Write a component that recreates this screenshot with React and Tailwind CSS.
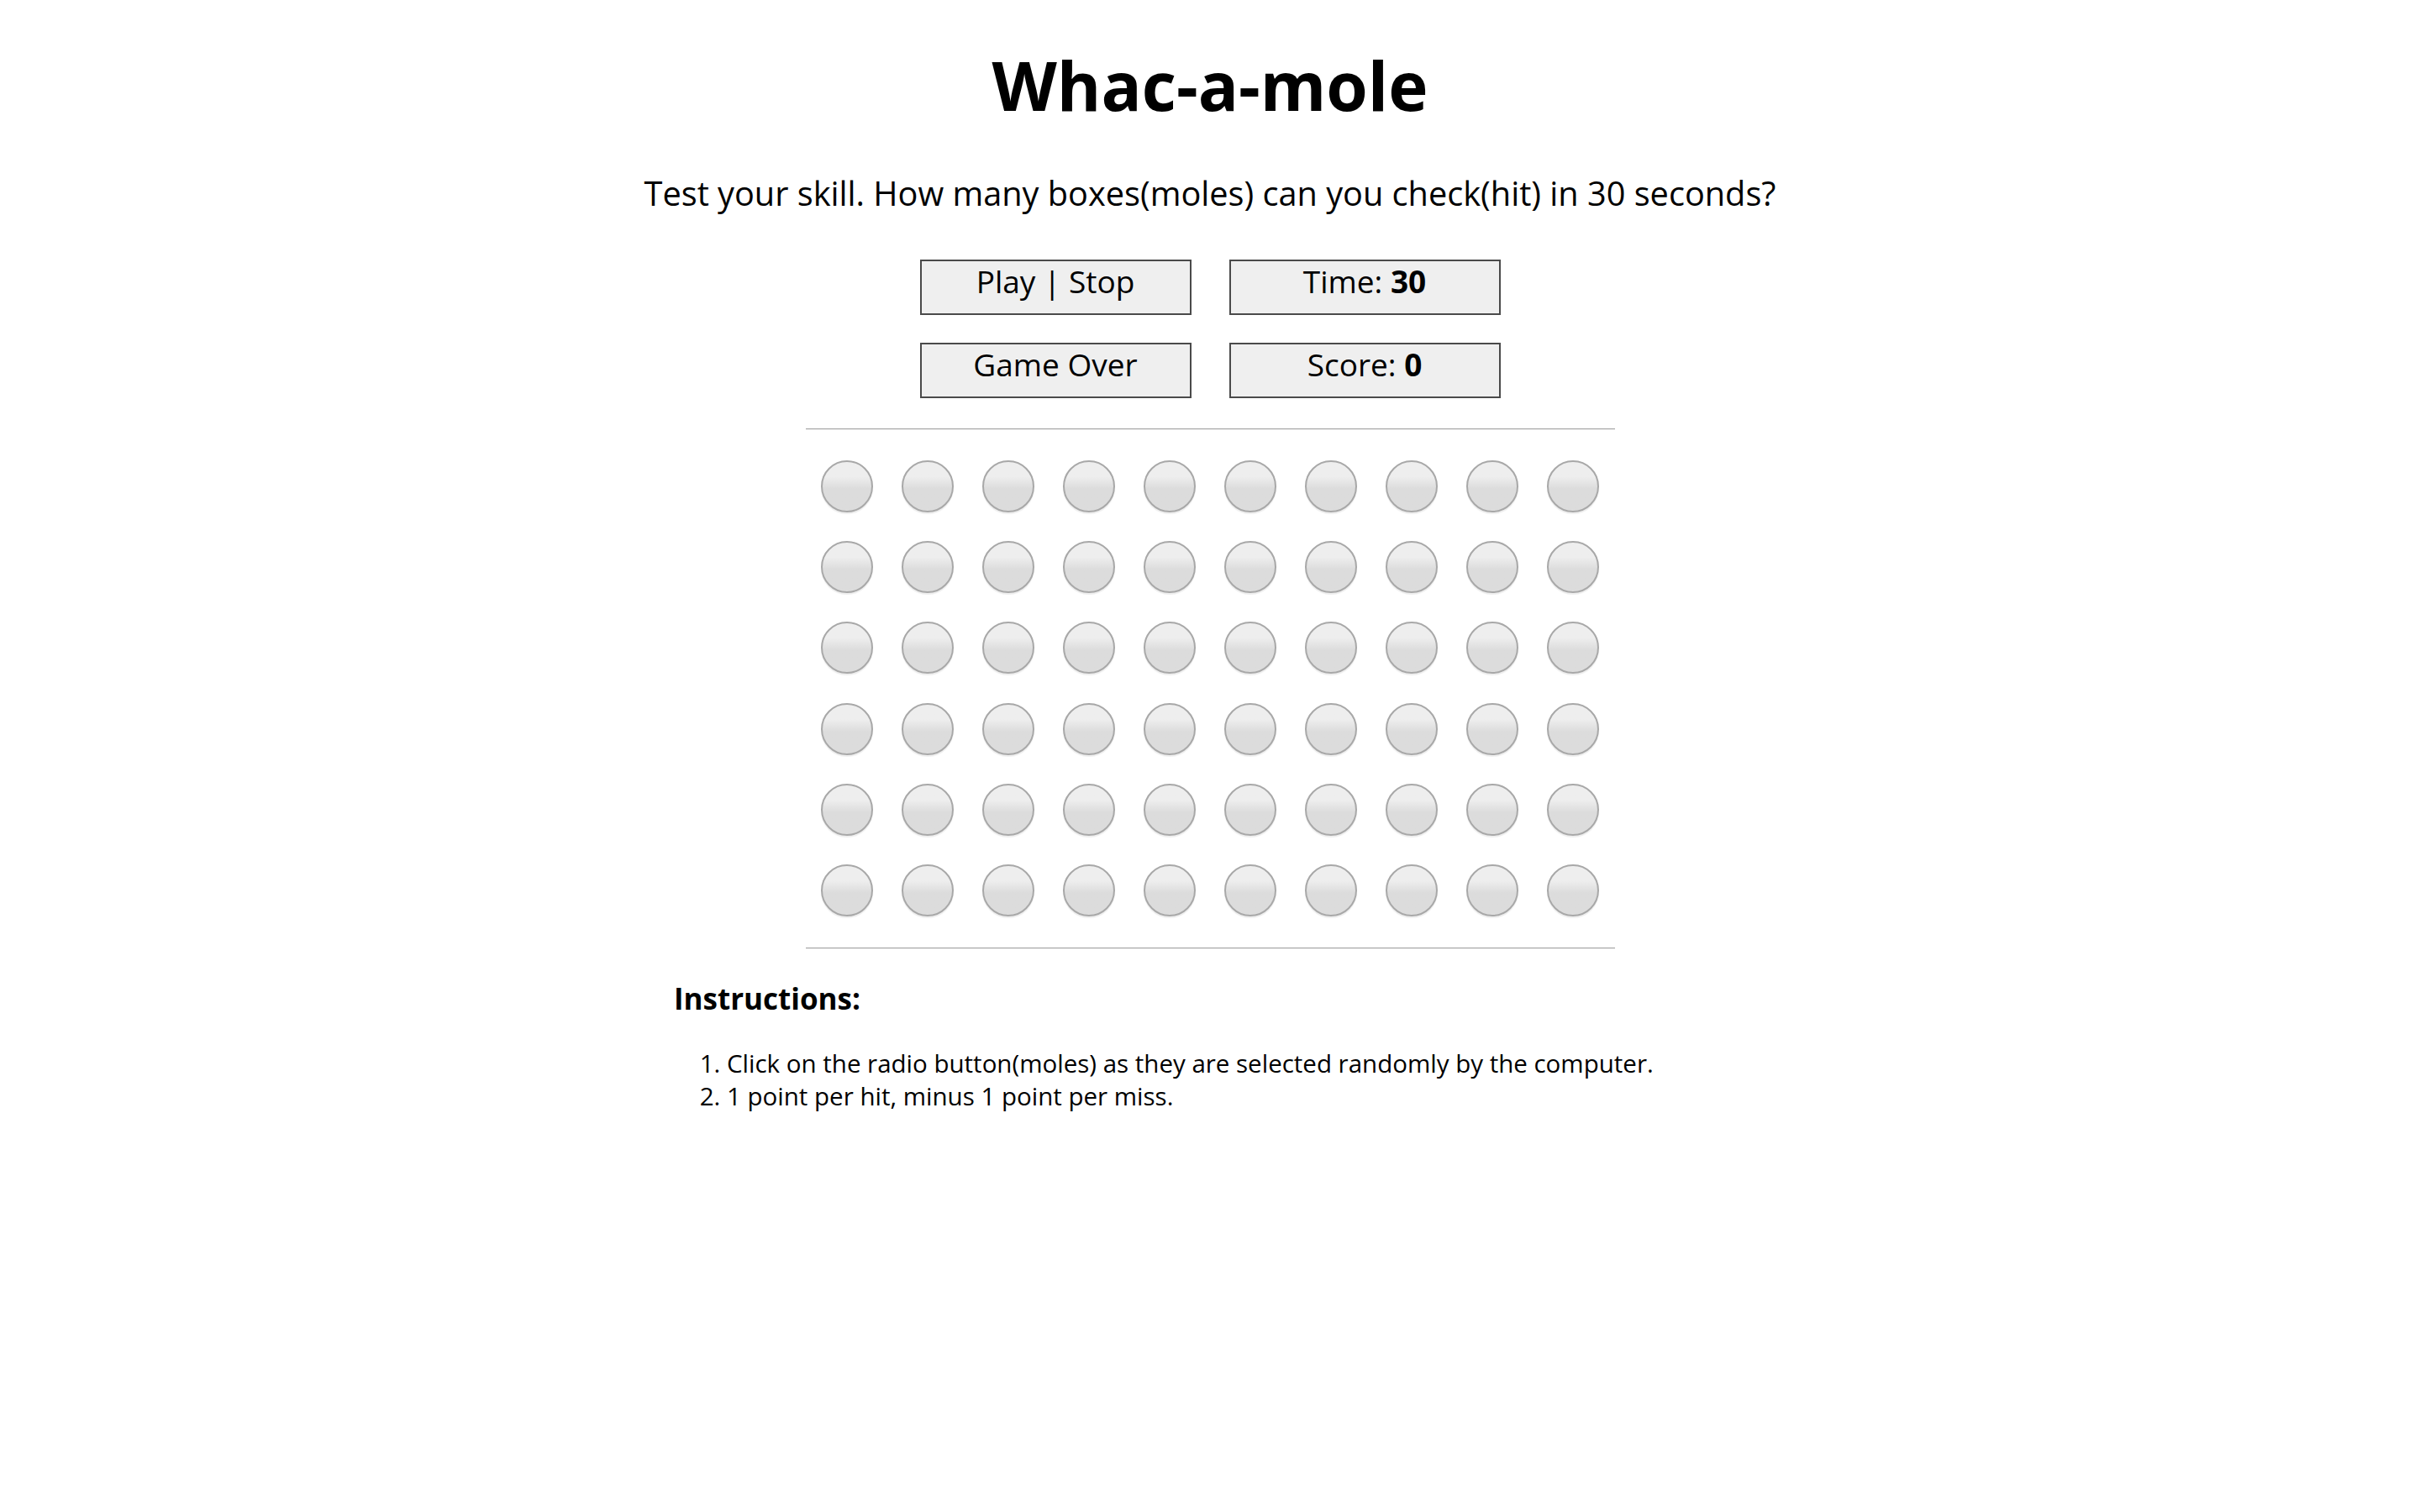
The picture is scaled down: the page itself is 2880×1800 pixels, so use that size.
import { useState } from 'react'

const ROWS = 6
const COLS = 10

function Mole({ checked, onClick }) {
  return (
    <button
      type="button"
      onClick={onClick}
      className={
        'w-[62px] h-[62px] rounded-full border-2 border-[#a8a8a8] shadow-[0_2px_1px_#eeeeee] ' +
        (checked
          ? 'bg-linear-to-b from-[#bcd6ee] to-[#8fb8e0]'
          : 'bg-linear-to-b from-[#eeeeee] from-30% to-[#dcdcdc] to-55%')
      }
    />
  )
}

export default function App() {
  const [hit, setHit] = useState(null)
  const [score] = useState(0)
  const [time] = useState(30)

  const box = 'h-[66px] border-2 border-[#4a4a4a] bg-[#efefef] pt-[1px] text-[37px] leading-[46px] text-black text-center cursor-default'

  return (
    <div className="min-h-screen bg-white text-black font-['Open_Sans','Noto_Sans',sans-serif]">
      <div className="w-[1276px] mx-auto flex flex-col">
        <h1 className="mt-[61px] text-center text-[80px] leading-[80px] font-bold">Whac-a-mole</h1>

        <p className="mt-[70px] self-center whitespace-nowrap text-center text-[39.7px] leading-[39px]">
          Test your skill. How many boxes(moles) can you check(hit) in 30 seconds?
        </p>

        <div className="mt-[59px] mx-auto grid grid-cols-[323px_323px] gap-x-[45px] gap-y-[33px]">
          <div role="button" className={box}>Play | Stop</div>
          <div className={box}>Time: <span className="font-bold">{time}</span></div>
          <div className={box}>Game Over</div>
          <div className={box}>Score: <span className="font-bold">{score}</span></div>
        </div>

        <div className="mt-[36px] mx-auto w-[963px] border-t border-b border-t-[#a5a5a5] border-b-[#ededed]" />

        <div className="mt-[36px] mx-auto grid grid-cols-[repeat(10,62px)] gap-x-[34px] gap-y-[34.2px]">
          {Array.from({ length: ROWS * COLS }).map((_, i) => (
            <Mole key={i} checked={hit === i} onClick={() => setHit(i)} />
          ))}
        </div>

        <div className="mt-[37px] mx-auto w-[963px] border-t border-b border-t-[#a5a5a5] border-b-[#ededed]" />

        <h3 className="mt-[41px] text-[35px] leading-[35px] font-bold">Instructions:</h3>

        <ol className="mt-[40px] pl-[63px] list-decimal text-[29.5px] leading-[39px]">
          <li>Click on the radio button(moles) as they are selected randomly by the computer.</li>
          <li>1 point per hit, minus 1 point per miss.</li>
        </ol>
      </div>
    </div>
  )
}
